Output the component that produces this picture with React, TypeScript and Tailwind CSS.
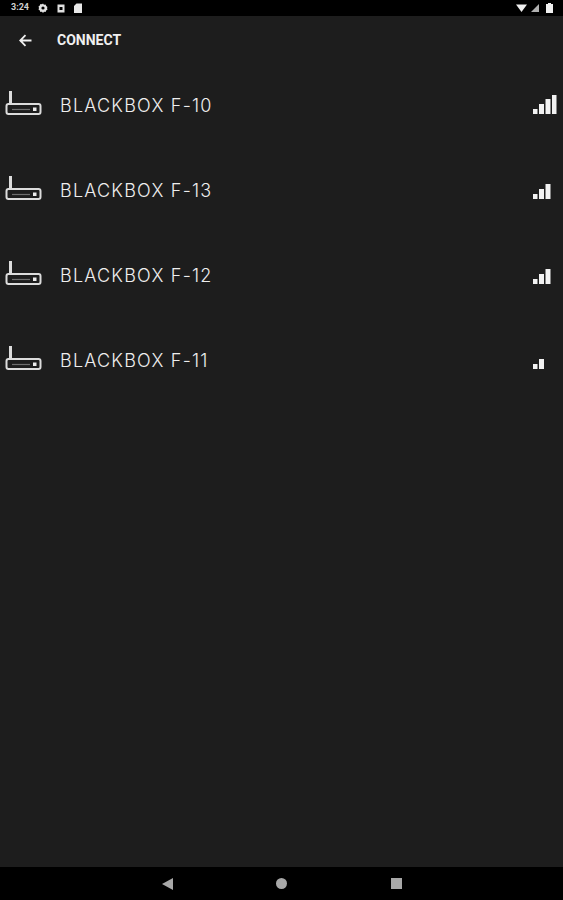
const devices = [
  { name: "BLACKBOX F-10", bars: 4 },
  { name: "BLACKBOX F-13", bars: 3 },
  { name: "BLACKBOX F-12", bars: 3 },
  { name: "BLACKBOX F-11", bars: 2 },
];

function RouterIcon() {
  return (
    <svg width="42" height="28" viewBox="0 0 42 28" fill="none" stroke="#dcdcdc" strokeWidth="2">
      <path d="M10.5 1V14" strokeWidth="3" />
      <rect x="6.5" y="14" width="34" height="10" rx="2" />
      <path d="M12 19.5H30" strokeWidth="1.2" stroke="#6e6e6e" />
      <rect x="33" y="17.5" width="3.5" height="3.5" fill="#ececec" stroke="none" />
    </svg>
  );
}

function SignalIcon({ bars }: { bars: number }) {
  const rects = [
    { x: 0, y: 14, w: 4.5, h: 5 },
    { x: 6, y: 9, w: 5, h: 10 },
    { x: 12.5, y: 4, w: 5, h: 15 },
    { x: 19, y: 0, w: 4.5, h: 19 },
  ];
  return (
    <svg width="24" height="20" viewBox="0 0 24 20" fill="#f2f2f2">
      {rects.slice(0, bars).map((r) => (
        <rect key={r.x} x={r.x} y={r.y} width={r.w} height={r.h} />
      ))}
    </svg>
  );
}

function StatusBar() {
  return (
    <div className="flex h-4 items-center justify-between bg-black pl-[11px] pr-[10px] text-[#d0d0d0]">
      <div className="flex items-center gap-[9px]">
        <span className="font-['Roboto',sans-serif] text-[9px] font-bold">3:24</span>
        <svg width="10" height="10" viewBox="0 0 10 10" fill="#e0e0e0">
          <path d="M5 0.5l1 1.2 1.6-.2.6 1.5 1.3.9L9 5l.5 1.6-1.3.9-.6 1.5-1.6-.2-1 1.2-1-1.2-1.6.2-.6-1.5-1.3-.9L1 5 .5 3.4l1.3-.9.6-1.5 1.6.2z" />
          <circle cx="5" cy="5" r="1.6" fill="#000" />
        </svg>
        <svg width="8" height="9" viewBox="0 0 8 9" fill="#e0e0e0">
          <path d="M0.5 0.5h7v8h-7zM2.5 3v3h3V3z" fillRule="evenodd" />
        </svg>
        <svg width="8" height="10" viewBox="0 0 8 10" fill="#e8e8e8">
          <path d="M2.5 0.5H8v9.5H0V3z" />
        </svg>
      </div>
      <div className="flex items-center gap-[4px]">
        <svg width="11" height="8" viewBox="0 0 11 8" fill="#f0f0f0">
          <path d="M0 0.5h11L5.5 8z" />
        </svg>
        <svg width="8" height="8" viewBox="0 0 8 8" fill="#b0b0b0">
          <path d="M8 0v8H0z" />
        </svg>
        <svg width="7" height="10" viewBox="0 0 7 10" fill="#f0f0f0" className="ml-[3px]">
          <path d="M2 0h3v1h2v9H0V1h2z" />
        </svg>
      </div>
    </div>
  );
}

export default function App() {
  return (
    <div className="flex h-[900px] w-[563px] flex-col bg-[#1d1d1d] font-['Inter',sans-serif]">
      <StatusBar />
      <header className="flex h-[48px] items-center pl-[19px]">
        <svg width="13" height="13" viewBox="0 0 13 13" fill="none" stroke="#f0f0f0" strokeWidth="1.8">
          <path d="M12.5 6.5H1.5M6.5 1.2L1.2 6.5l5.3 5.3" />
        </svg>
        <span className="ml-[25px] font-['Roboto',sans-serif] text-[14px] font-bold text-[#f0f0f0]">
          CONNECT
        </span>
      </header>
      <ul className="flex flex-1 flex-col">
        {devices.map((d) => (
          <li key={d.name} className="flex h-[85px] items-center pr-[6px]">
            <div className="mb-[5px]">
              <RouterIcon />
            </div>
            <span className="mb-[3px] ml-[18px] text-[18px] font-light tracking-[1.2px] text-[#eeeeee]">{d.name}</span>
            <div className="mb-[3px] ml-auto w-[24px]">
              <SignalIcon bars={d.bars} />
            </div>
          </li>
        ))}
      </ul>
      <nav className="flex h-[33px] items-center bg-black pl-[162px]">
        <svg width="11" height="12" viewBox="0 0 11 12" fill="#a8a8a8">
          <path d="M11 0v12L0 6z" />
        </svg>
        <div className="ml-[103px] h-[11px] w-[11px] rounded-full bg-[#a8a8a8]" />
        <div className="ml-[104px] h-[11px] w-[11px] bg-[#a8a8a8]" />
      </nav>
    </div>
  );
}
